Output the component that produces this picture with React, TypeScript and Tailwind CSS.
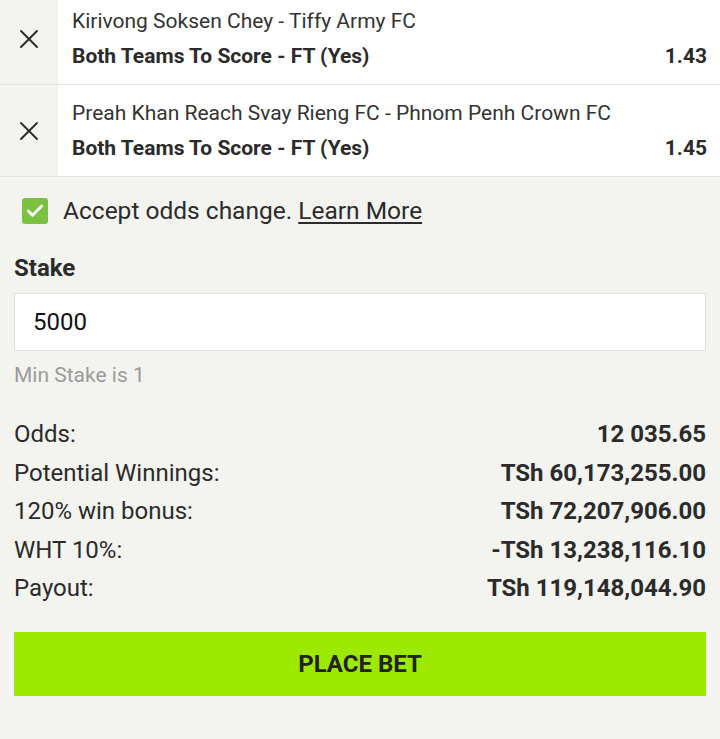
import { Check, X } from 'lucide-react';

interface SelectionRowProps {
    title: string;
    market: string;
    odds: string;
    top?: boolean;
}

const selections = [
    { title: 'Kirivong Soksen Chey - Tiffy Army FC', market: 'Both Teams To Score - FT (Yes)', odds: '1.43' },
    { title: 'Preah Khan Reach Svay Rieng FC - Phnom Penh Crown FC', market: 'Both Teams To Score - FT (Yes)', odds: '1.45' },
];

const summary = [
    { label: 'Odds:', value: '12 035.65' },
    { label: 'Potential Winnings:', value: 'TSh 60,173,255.00' },
    { label: '120% win bonus:', value: 'TSh 72,207,906.00' },
    { label: 'WHT 10%:', value: '-TSh 13,238,116.10' },
    { label: 'Payout:', value: 'TSh 119,148,044.90' },
];

function SelectionRow(props: SelectionRowProps) {
    const { title, market, odds, top } = props;
    return (
        <div className={`flex flex-row border-b border-[#e3e3e1] ${top ? '-mt-[7px] h-[92px]' : 'h-[92px]'}`}>
            <div className="flex w-[58px] items-center justify-center bg-[#f3f3ef]">
                <X className="h-[32px] w-[32px] text-[#2b2b2b]" strokeWidth={1.4} />
            </div>
            <div className="flex flex-1 flex-col justify-center bg-white pl-[14px] pr-[13px]">
                <div className="text-[21px] leading-[26px] text-[#333]">{title}</div>
                <div className="mt-[9px] flex flex-row justify-between text-[21px] leading-[26px] font-bold text-[#2b2b2b]">
                    <span>{market}</span>
                    <span>{odds}</span>
                </div>
            </div>
        </div>
    );
}

export default function App() {
    return (
        <div className="h-[739px] overflow-hidden bg-[#f3f3ef] font-['Roboto',sans-serif] text-[#2b2b2b]">
            <div className="overflow-hidden">
                {selections.map((s, i) => (
                    <SelectionRow key={i} {...s} top={i === 0} />
                ))}
            </div>

            <div className="px-[14px]">
                <div className="mt-[20px] flex flex-row items-center pl-[8px]">
                    <div className="flex h-[26px] w-[26px] items-center justify-center rounded-[3px] bg-[#7cc242]">
                        <Check className="h-[20px] w-[20px] text-white" strokeWidth={3.5} />
                    </div>
                    <span className="ml-[15px] text-[24.5px] leading-[28px]">
                        Accept odds change. <span className="underline underline-offset-[3px]">Learn More</span>
                    </span>
                </div>

                <div className="mt-[29px] text-[24px] leading-[28px] font-bold">Stake</div>

                <div className="mt-[11px] flex h-[58px] items-center border border-[#e0e0de] bg-white px-[18px] text-[24px] text-[#111]">
                    5000
                </div>

                <div className="mt-[11px] text-[21px] leading-[26px] text-[#9b9b9b]">Min Stake is 1</div>

                <div className="mt-[27px] flex flex-col">
                    {summary.map((row) => (
                        <div key={row.label} className="flex h-[38.5px] flex-row items-center justify-between text-[24px]">
                            <span>{row.label}</span>
                            <span className="font-bold">{row.value}</span>
                        </div>
                    ))}
                </div>

                <button className="mt-[24px] flex h-[64px] w-full items-center justify-center bg-[#9de900] text-[24px] font-bold text-[#222]">
                    PLACE BET
                </button>
            </div>
        </div>
    );
}
